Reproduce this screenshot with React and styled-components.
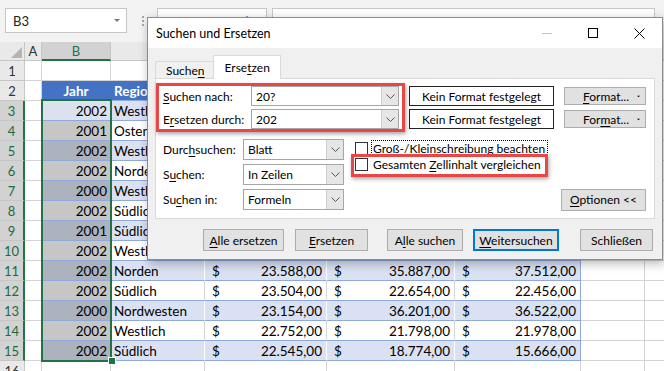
import styled, { createGlobalStyle } from "styled-components";

const GlobalStyle = createGlobalStyle`
  html, body { margin: 0; padding: 0; }
  body {
    width: 664px;
    height: 371px;
    overflow: hidden;
    background: #fff;
    font-family: Lato, "Liberation Sans", sans-serif;
  }
`;

const GREEN = "#217346";
const GRID = "#d4d4d4";
const BAND = "#d9e1f2";
const TABLE_LINE = "#8ea9db";
const HEAD_BLUE = "#4472c4";

const COLS = [17, 69, 94, 122, 128, 126, 64, 80];
const LETTERS = ["A", "B", "C", "D", "E", "F", "G", "H"];

const data = [
  [2002, "Westlich", "24.132,00", "33.410,00", "34.020,00"],
  [2001, "Osten", "24.020,00", "31.256,00", "30.114,00"],
  [2002, "Westlich", "23.980,00", "29.845,00", "31.447,00"],
  [2002, "Norden", "23.911,00", "28.120,00", "27.690,00"],
  [2000, "Westlich", "23.874,00", "34.552,00", "35.001,00"],
  [2002, "Südlich", "23.812,00", "26.330,00", "25.908,00"],
  [2001, "Südlich", "23.701,00", "24.998,00", "24.310,00"],
  [2002, "Westlich", "23.640,00", "30.412,00", "29.877,00"],
  [2002, "Norden", "23.588,00", "35.887,00", "37.512,00"],
  [2002, "Südlich", "23.504,00", "22.654,00", "22.456,00"],
  [2000, "Nordwesten", "23.154,00", "36.201,00", "36.522,00"],
  [2002, "Westlich", "22.752,00", "21.798,00", "21.978,00"],
  [2002, "Südlich", "22.545,00", "18.774,00", "15.666,00"],
];

const Page = styled.div`
  position: relative;
  width: 664px;
  height: 371px;
  overflow: hidden;
  background: #f3f3f3;
`;

/* ---------- formula bar ---------- */

const FormulaBar = styled.div`
  display: flex;
  align-items: flex-start;
  height: 42px;
  box-sizing: border-box;
  padding: 8px 0 0 5px;
`;

const NameBox = styled.div`
  box-sizing: border-box;
  width: 122px;
  height: 25px;
  background: #fff;
  border: 1px solid #c6c6c6;
  display: flex;
  align-items: center;
  justify-content: space-between;
  padding: 0 6px 0 7px;
  font-size: 13px;
  color: #222;
`;

const Grip = styled.div`
  width: 2px;
  height: 10px;
  margin: 8px 0 0 15px;
  background: repeating-linear-gradient(#a6a6a6 0 2px, transparent 2px 4px);
`;

const FxBox = styled.div`
  box-sizing: border-box;
  width: 110px;
  height: 25px;
  margin-left: 13px;
  background: #fff;
  border: 1px solid #c6c6c6;
  display: flex;
  align-items: center;
  justify-content: space-around;
  color: #8a8a8a;
  font-size: 13px;
`;

const InputBox = styled.div`
  box-sizing: border-box;
  width: 383px;
  height: 25px;
  margin-left: 5px;
  background: #fff;
  border: 1px solid #c6c6c6;
`;

/* ---------- sheet ---------- */

const Sheet = styled.div`
  position: relative;
  display: grid;
  grid-template-columns: 25px ${COLS.map((w) => w + "px").join(" ")};
  grid-template-rows: 19px;
  grid-auto-rows: 20px;
  background: #fff;
  font-size: 13.5px;
`;

const Corner = styled.div`
  box-sizing: border-box;
  background: #e9e9e9;
  border-right: 1px solid #c6c6c6;
  border-bottom: 1px solid #c6c6c6;
  display: flex;
  align-items: flex-end;
  justify-content: flex-end;
  padding: 0 2px 2px 0;
`;

const ColHead = styled.div`
  box-sizing: border-box;
  background: ${(p) => (p.$sel ? "#d2d2d2" : "#e9e9e9")};
  color: ${(p) => (p.$sel ? GREEN : "#333")};
  border-right: 1px solid #c6c6c6;
  border-bottom: ${(p) => (p.$sel ? `2px solid ${GREEN}` : "1px solid #c6c6c6")};
  display: flex;
  align-items: center;
  justify-content: center;
  font-size: 13px;
`;

const RowHead = styled.div`
  box-sizing: border-box;
  background: ${(p) => (p.$sel ? "#d2d2d2" : "#e9e9e9")};
  color: ${(p) => (p.$sel ? "#1b6a3e" : "#333")};
  border-bottom: 1px solid #c6c6c6;
  border-right: ${(p) => (p.$sel ? `2px solid ${GREEN}` : "1px solid #c6c6c6")};
  display: flex;
  align-items: center;
  justify-content: center;
  font-size: 13px;
`;

const Cell = styled.div`
  box-sizing: border-box;
  min-width: 0;
  background: ${(p) => p.$bg || "#fff"};
  border-right: 1px solid ${(p) => p.$side || GRID};
  border-bottom: 1px solid ${(p) => p.$under || GRID};
  color: ${(p) => p.$color || "#000"};
  font-weight: ${(p) => (p.$bold ? 700 : 400)};
  display: flex;
  align-items: center;
  justify-content: ${(p) => p.$align || "flex-start"};
  padding: 0 3px;
  white-space: nowrap;
  overflow: hidden;
`;

const MoneyCell = styled(Cell)`
  justify-content: space-between;
  padding: 0 4px 0 7px;
`;

const SelectionFrame = styled.div`
  position: absolute;
  left: 41px;
  top: 57px;
  width: 71px;
  height: 263px;
  box-sizing: border-box;
  border: 2px solid ${GREEN};
  pointer-events: none;
`;

const FillHandle = styled.div`
  position: absolute;
  left: 108px;
  top: 315px;
  width: 6px;
  height: 6px;
  background: ${GREEN};
  border: 1px solid #fff;
`;

/* ---------- dialog ---------- */

const Dialog = styled.div`
  position: absolute;
  left: 147px;
  top: 17px;
  width: 516px;
  height: 243px;
  box-sizing: border-box;
  border: 1px solid #8c8c8c;
  background: #f0f0f0;
  box-shadow: 2px 3px 10px rgba(0, 0, 0, 0.3);
  font-family: Lato, "Liberation Sans", sans-serif;
  font-size: 12px;
  color: #000;
  display: flex;
  flex-direction: column;
`;

const TitleBar = styled.div`
  height: 30px;
  flex-shrink: 0;
  background: #fff;
  display: flex;
  align-items: center;
  padding-left: 8px;
`;

const Title = styled.div`
  flex: 1;
  font-size: 12.5px;
`;

const WinButton = styled.div`
  width: 46px;
  height: 30px;
  display: flex;
  align-items: center;
  justify-content: center;
`;

const Body = styled.div`
  padding: 0 7px;
`;

const TabStrip = styled.div`
  height: 30px;
  display: flex;
  align-items: flex-end;
`;

const Tab = styled.div`
  box-sizing: border-box;
  position: relative;
  z-index: ${(p) => (p.$active ? 1 : 0)};
  height: ${(p) => (p.$active ? "24px" : "17px")};
  margin-bottom: ${(p) => (p.$active ? "-1px" : "0")};
  margin-left: ${(p) => (p.$first ? "0" : "-1px")};
  padding: ${(p) => (p.$active ? "0 10px 0 11px" : "0 8px 0 10px")};
  background: ${(p) => (p.$active ? "#fff" : "#f0f0f0")};
  border: 1px solid #d9d9d9;
  border-bottom: none;
  display: flex;
  align-items: center;
`;

const Panel = styled.div`
  position: relative;
  box-sizing: border-box;
  width: 500px;
  height: 141px;
  background: #fff;
  border: 1px solid #d9d9d9;
  padding: 7px 8px 0 7px;
`;

const FieldGrid = styled.div`
  display: grid;
  grid-template-columns: 78px 148px 145px 82px;
  grid-auto-rows: 20px;
  column-gap: 10px;
  row-gap: 3px;
  align-items: center;
`;

const OptionGrid = styled.div`
  margin-top: 10px;
  display: grid;
  grid-template-columns: 70px 101px 1fr auto;
  grid-auto-rows: 21px;
  column-gap: 10px;
  row-gap: 4px;
  align-items: center;
`;

const Label = styled.div`
  white-space: nowrap;
`;

const Combo = styled.div`
  box-sizing: border-box;
  height: ${(p) => p.$h || 20}px;
  display: flex;
  background: #fff;
  border: 1px solid #a6a6a6;
`;

const ComboText = styled.div`
  flex: 1;
  display: flex;
  align-items: center;
  padding-left: 4px;
`;

const ComboButton = styled.div`
  width: 16px;
  background: #e6e6e6;
  border-left: 1px solid #cfcfcf;
  display: flex;
  align-items: center;
  justify-content: center;
`;

const FormatBox = styled.div`
  box-sizing: border-box;
  height: 20px;
  border: 1px solid #222;
  background: #fff;
  display: flex;
  align-items: center;
  justify-content: center;
`;

const Button = styled.div`
  box-sizing: border-box;
  width: ${(p) => p.$w}px;
  height: ${(p) => p.$h || 22}px;
  margin-left: ${(p) => p.$space || 0}px;
  background: #e1e1e1;
  border: ${(p) => (p.$default ? "2px solid #0078d7" : "1px solid #adadad")};
  display: flex;
  align-items: center;
  justify-content: center;
  white-space: nowrap;
`;

const SplitButton = styled(Button)`
  justify-content: flex-start;
  padding: 0 5px 0 18px;
  gap: 8px;
  & > svg {
    margin-left: auto;
  }
`;

const CheckList = styled.div`
  grid-column: 3 / span 2;
  grid-row: 1 / span 2;
  align-self: start;
  display: flex;
  flex-direction: column;
  gap: 3px;
  padding: 3px 0 0 1px;
`;

const CheckRow = styled.div`
  height: 13px;
  display: flex;
  align-items: center;
  gap: 3px;
`;

const Box = styled.div`
  box-sizing: border-box;
  width: 13px;
  height: 13px;
  flex-shrink: 0;
  background: #fff;
  border: 1px solid #333;
`;

const CheckText = styled.span`
  white-space: nowrap;
  line-height: 15px;
  padding: 0 2px 0 1px;
  border: 1px dotted ${(p) => (p.$focus ? "#000" : "transparent")};
`;

const OptionsSlot = styled.div`
  grid-column: 4;
  grid-row: 3;
`;

const Mark = styled.div`
  position: absolute;
  left: ${(p) => p.$x}px;
  top: ${(p) => p.$y}px;
  width: ${(p) => p.$w}px;
  height: ${(p) => p.$h}px;
  box-sizing: border-box;
  border: 3px solid #ea4646;
  box-shadow: 1px 2px 4px rgba(0, 0, 0, 0.35);
  pointer-events: none;
`;

const ButtonRow = styled.div`
  display: flex;
  margin-top: 10px;
  padding-left: 48px;
`;

const Key = styled.span`
  text-decoration: underline;
  text-underline-offset: 2px;
`;

const Chevron = () => (
  <svg width="9" height="5" viewBox="0 0 9 5">
    <polyline points="0.5,0.5 4.5,4.5 8.5,0.5" fill="none" stroke="#555" strokeWidth="1" />
  </svg>
);

const Caret = ({ color = "#000" }) => (
  <svg width="6" height="3" viewBox="0 0 6 3">
    <polygon points="0,0 6,0 3,3" fill={color} />
  </svg>
);

const DropField = ({ value, h }) => (
  <Combo $h={h}>
    <ComboText>{value}</ComboText>
    <ComboButton>
      <Chevron />
    </ComboButton>
  </Combo>
);

const Check = ({ children, focus }) => (
  <CheckRow>
    <Box />
    <CheckText $focus={focus}>{children}</CheckText>
  </CheckRow>
);

const renderRow = (r) => {
  const cells = [];
  const sel = r >= 3 && r <= 15;
  cells.push(
    <RowHead key={`h${r}`} $sel={sel}>
      {r}
    </RowHead>
  );
  if (r === 2) {
    const heads = ["Jahr", "Region", "Umsatz Q1", "Umsatz Q2", "Umsatz Q3"];
    cells.push(<Cell key="a" />);
    heads.forEach((t, i) =>
      cells.push(
        <Cell
          key={t}
          $bg={HEAD_BLUE}
          $side={HEAD_BLUE}
          $under={TABLE_LINE}
          $color="#fff"
          $bold
          $align={i === 0 ? "center" : "flex-start"}
        >
          {t}
        </Cell>
      )
    );
    cells.push(<Cell key="g" />, <Cell key="h" />);
    return cells;
  }
  if (!sel) {
    LETTERS.forEach((l) => cells.push(<Cell key={l} />));
    return cells;
  }
  const [year, region, q1, q2, q3] = data[r - 3];
  const banded = r % 2 === 1;
  const bg = banded ? BAND : "#fff";
  const side = banded ? "#fff" : GRID;
  let yearBg = banded ? "#acb2be" : "#c6c6c6";
  if (r === 3) yearBg = "#dbe1ee";
  cells.push(<Cell key="a" />);
  cells.push(
    <Cell key="b" $bg={yearBg} $side={side} $under={TABLE_LINE} $align="flex-end">
      {year}
    </Cell>
  );
  cells.push(
    <Cell key="c" $bg={bg} $side={side} $under={TABLE_LINE}>
      {region}
    </Cell>
  );
  [q1, q2, q3].forEach((v, i) =>
    cells.push(
      <MoneyCell key={`m${i}`} $bg={bg} $side={i === 2 ? TABLE_LINE : side} $under={TABLE_LINE}>
        <span>$</span>
        <span>{v}</span>
      </MoneyCell>
    )
  );
  cells.push(<Cell key="g" />, <Cell key="h" />);
  return cells;
};

export default function App() {
  const rows = [];
  for (let r = 1; r <= 16; r++) rows.push(...renderRow(r));

  return (
    <>
      <GlobalStyle />
      <Page>
        <FormulaBar>
          <NameBox>
            <span>B3</span>
            <Caret color="#7a7a7a" />
          </NameBox>
          <Grip />
          <FxBox>
            <span>✕</span>
            <span>✓</span>
            <span>
              <i>fx</i>
            </span>
          </FxBox>
          <InputBox />
        </FormulaBar>

        <Sheet>
          <Corner>
            <svg width="11" height="11" viewBox="0 0 11 11">
              <polygon points="11,0 11,11 0,11" fill="#b4b4b4" />
            </svg>
          </Corner>
          {LETTERS.map((l) => (
            <ColHead key={l} $sel={l === "B"}>
              {l}
            </ColHead>
          ))}
          {rows}
          <SelectionFrame />
          <FillHandle />
        </Sheet>

        <Dialog>
          <TitleBar>
            <Title>Suchen und Ersetzen</Title>
            <WinButton>
              <svg width="10" height="1" viewBox="0 0 10 1">
                <rect width="10" height="1" fill="#c4c4c4" />
              </svg>
            </WinButton>
            <WinButton>
              <svg width="10" height="10" viewBox="0 0 10 10">
                <rect x="0.5" y="0.5" width="9" height="9" fill="none" stroke="#000" />
              </svg>
            </WinButton>
            <WinButton>
              <svg width="11" height="11" viewBox="0 0 11 11">
                <path d="M0.5 0.5 L10.5 10.5 M10.5 0.5 L0.5 10.5" stroke="#000" strokeWidth="1" />
              </svg>
            </WinButton>
          </TitleBar>

          <Body>
            <TabStrip>
              <Tab $first>
                Suche<Key>n</Key>
              </Tab>
              <Tab $active>
                Erse<Key>t</Key>zen
              </Tab>
            </TabStrip>

            <Panel>
              <FieldGrid>
                <Label>
                  <Key>S</Key>uchen nach:
                </Label>
                <DropField value="20?" />
                <FormatBox>Kein Format festgelegt</FormatBox>
                <SplitButton $w={82} $h={18}>
                  <span>
                    <Key>F</Key>ormat...
                  </span>
                  <Caret />
                </SplitButton>

                <Label>
                  E<Key>r</Key>setzen durch:
                </Label>
                <DropField value="202" />
                <FormatBox>Kein Format festgelegt</FormatBox>
                <SplitButton $w={82} $h={18}>
                  <span>
                    For<Key>m</Key>at...
                  </span>
                  <Caret />
                </SplitButton>
              </FieldGrid>

              <OptionGrid>
                <Label>
                  Durc<Key>h</Key>suchen:
                </Label>
                <DropField value="Blatt" h={21} />
                <CheckList>
                  <Check focus>
                    <Key>G</Key>roß-/Kleinschreibung beachten
                  </Check>
                  <Check>
                    Gesamten <Key>Z</Key>ellinhalt vergleichen
                  </Check>
                </CheckList>

                <Label>
                  S<Key>u</Key>chen:
                </Label>
                <DropField value="In Zeilen" h={21} />

                <Label>
                  Su<Key>c</Key>hen in:
                </Label>
                <DropField value="Formeln" h={21} />
                <OptionsSlot>
                  <Button $w={85}>
                    <span>
                      <Key>O</Key>ptionen &lt;&lt;
                    </span>
                  </Button>
                </OptionsSlot>
              </OptionGrid>

              <Mark $x={0} $y={4} $w={249} $h={49} />
              <Mark $x={195} $y={75} $w={197} $h={23} />
            </Panel>

            <ButtonRow>
              <Button $w={81}>
                <span>
                  <Key>A</Key>lle ersetzen
                </span>
              </Button>
              <Button $w={73} $space={11}>
                <span>
                  <Key>E</Key>rsetzen
                </span>
              </Button>
              <Button $w={76} $space={19}>
                <span>
                  A<Key>l</Key>le suchen
                </span>
              </Button>
              <Button $w={86} $space={10} $default>
                <span>
                  <Key>W</Key>eitersuchen
                </span>
              </Button>
              <Button $w={73} $space={21}>
                Schließen
              </Button>
            </ButtonRow>
          </Body>
        </Dialog>
      </Page>
    </>
  );
}
